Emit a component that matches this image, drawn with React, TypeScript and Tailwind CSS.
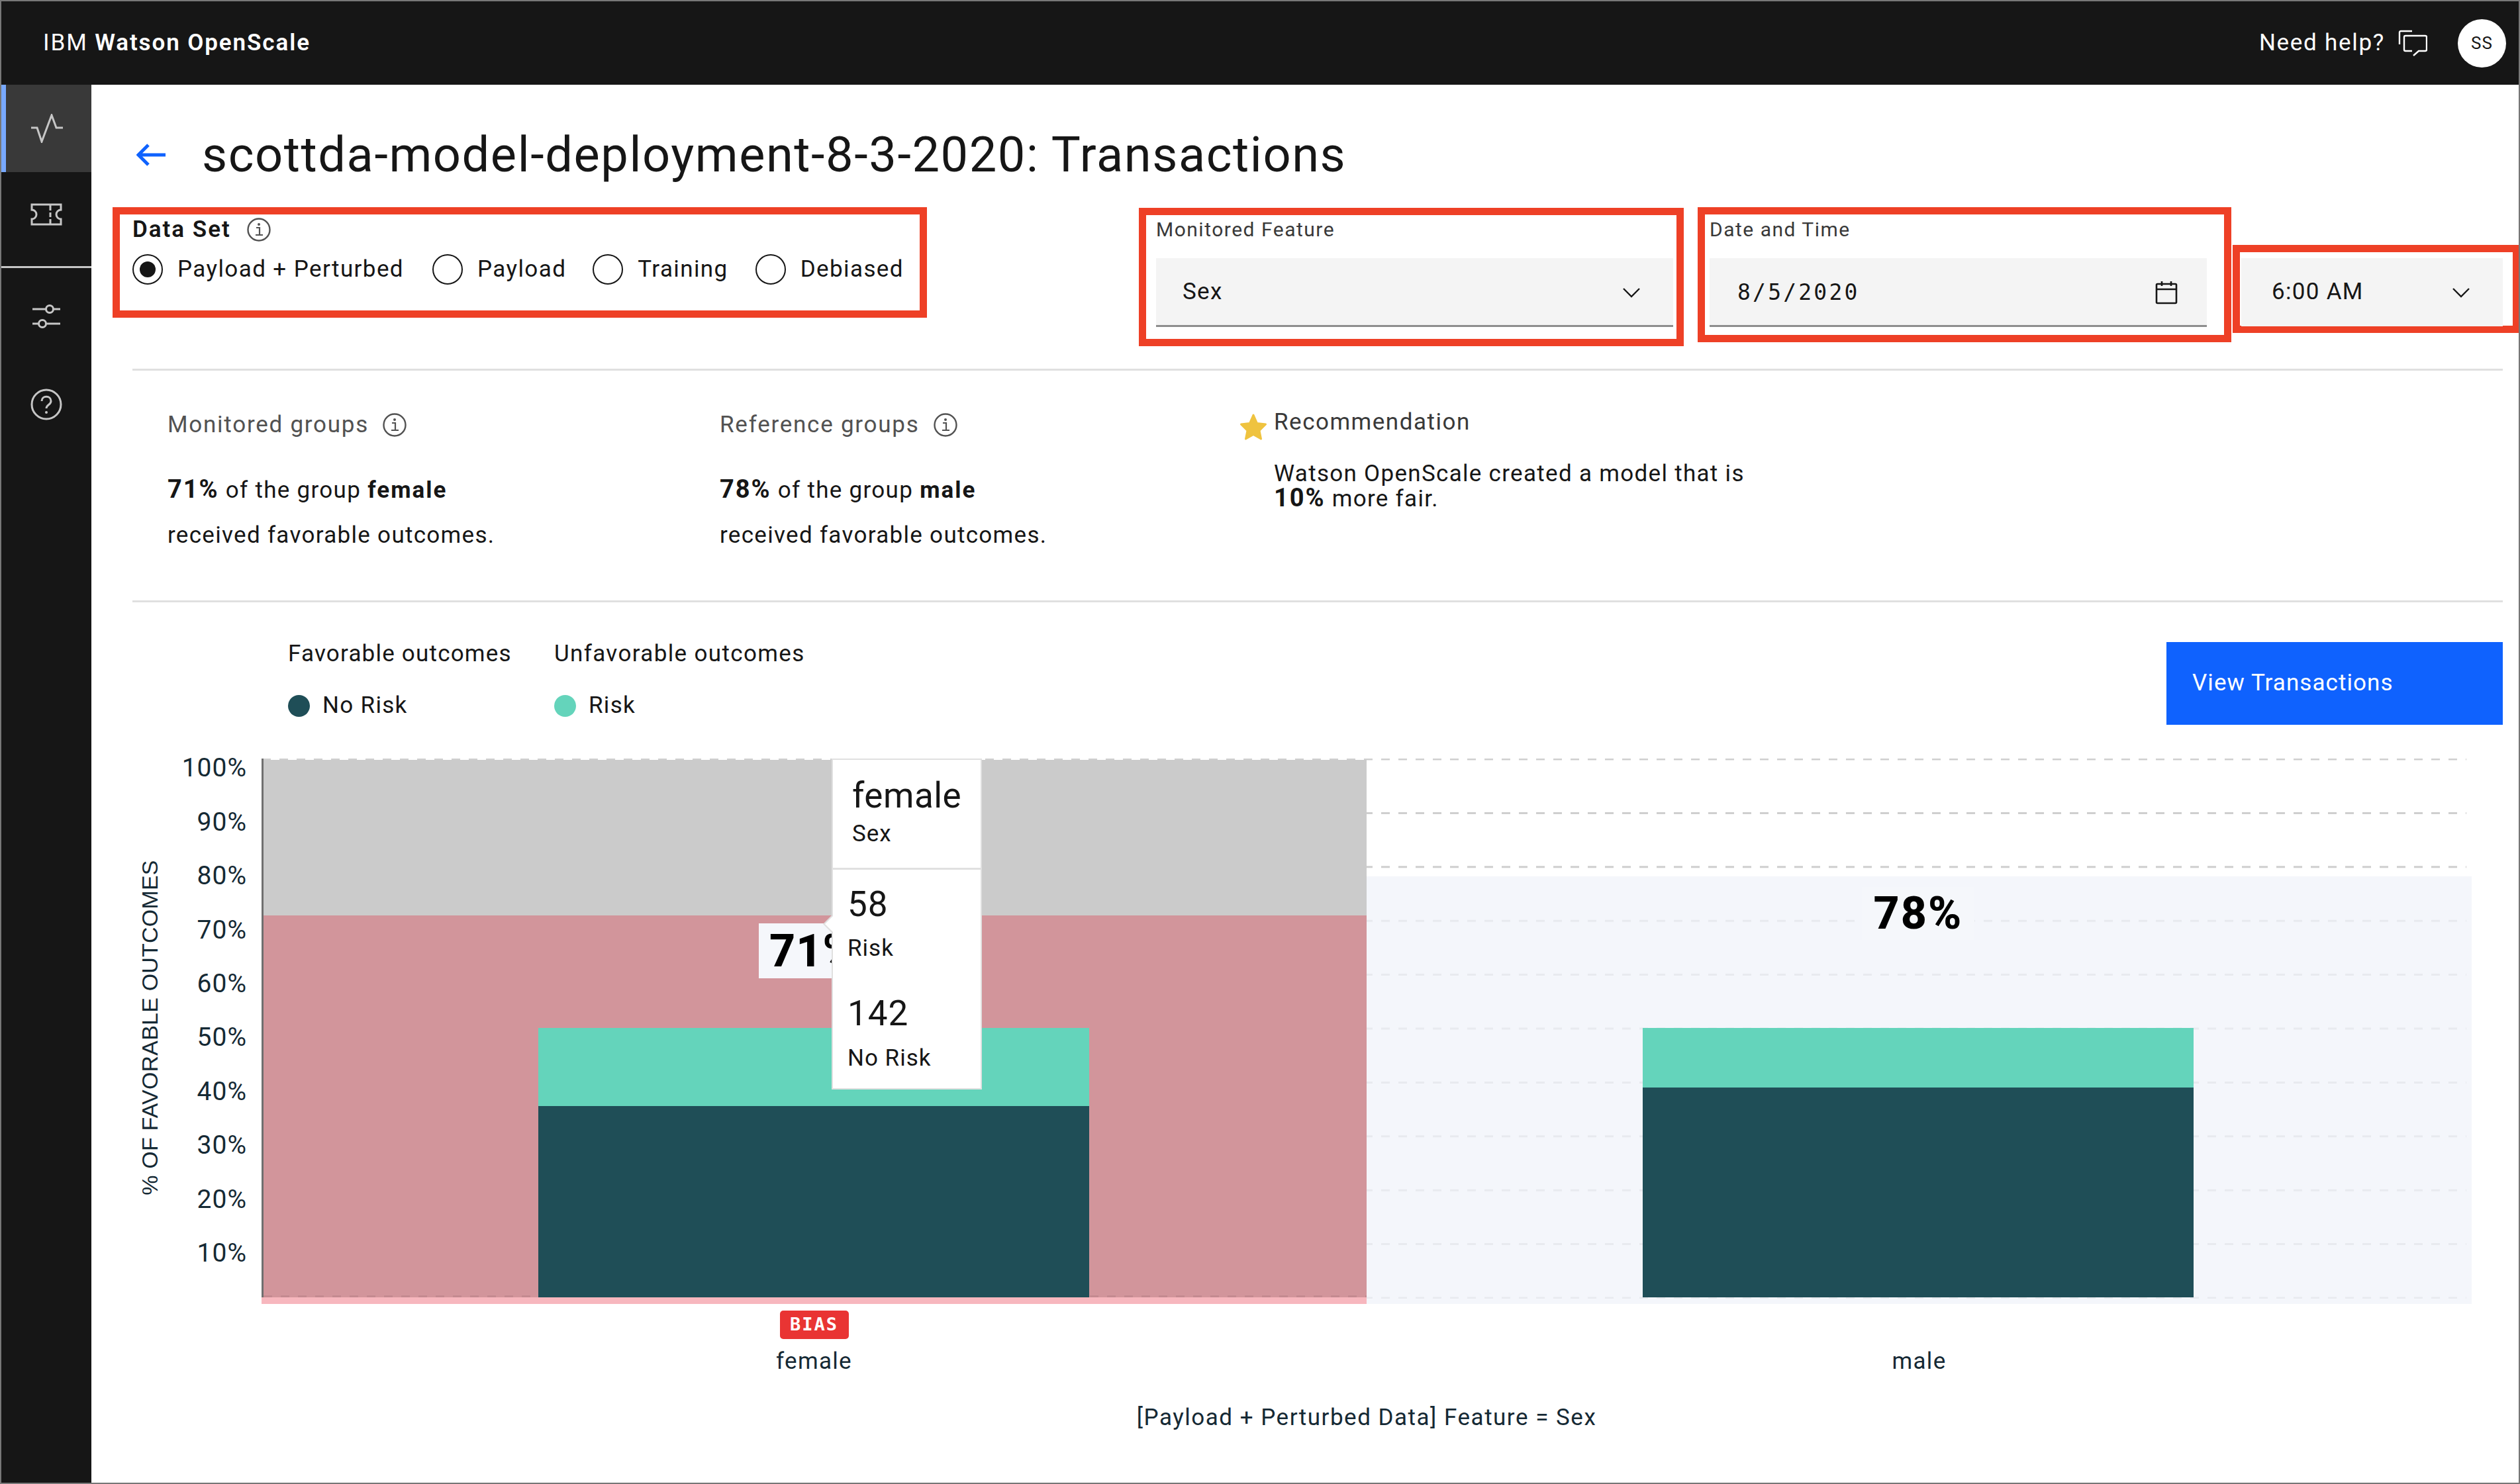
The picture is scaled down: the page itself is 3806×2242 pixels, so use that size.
const sans = "font-['Roboto',sans-serif]";

function InfoIcon({ className = "" }: { className?: string }) {
  return (
    <svg viewBox="0 0 36 36" className={"w-[36px] h-[36px] " + className} fill="none" stroke="#525252">
      <circle cx="18" cy="18" r="16.5" strokeWidth="2.4" />
      <path d="M14 15h5v11M13 26h11" strokeWidth="2.2" />
      <circle cx="18" cy="10" r="2" fill="#525252" stroke="none" />
    </svg>
  );
}

function Chevron() {
  return (
    <svg viewBox="0 0 28 16" className="w-[28px] h-[16px]" fill="none" stroke="#161616" strokeWidth="2.4">
      <path d="M2 2l12 12L26 2" />
    </svg>
  );
}

function Radio({ label, checked, ml }: { label: string; checked?: boolean; ml: string }) {
  return (
    <div className={"flex items-center " + ml}>
      <div className="w-[46px] h-[46px] rounded-full border-[2.5px] border-[#161616] flex items-center justify-center shrink-0">
        {checked && <div className="w-[24px] h-[24px] rounded-full bg-[#161616]" />}
      </div>
      <span className="ml-[22px] text-[35px] leading-[46px] text-[#161616] tracking-[1.4px] whitespace-nowrap">{label}</span>
    </div>
  );
}

function GroupCol({ title, pct, group }: { title: string; pct: string; group: string }) {
  return (
    <div className="w-[834px] flex flex-col">
      <div className="flex items-center h-[40px] text-[35px] text-[#525252] tracking-[1.75px] whitespace-nowrap">
        {title}
        <InfoIcon className="ml-[21px]" />
      </div>
      <div className="mt-[57px] h-[40px] leading-[40px] text-[35px] text-[#161616] tracking-[1.3px] whitespace-nowrap">
        <b className="font-bold text-[38px] tracking-[2px]">{pct}</b> of the group <b className="font-bold tracking-[2px]">{group}</b>
      </div>
      <div className="mt-[30px] h-[40px] leading-[40px] text-[35px] text-[#161616] tracking-[1.3px] whitespace-nowrap">received favorable outcomes.</div>
    </div>
  );
}

const ticks = ["100%", "90%", "80%", "70%", "60%", "50%", "40%", "30%", "20%", "10%"];

export default function App() {
  return (
    <div className={"w-[3806px] h-[2242px] border-2 border-[#777777] bg-white flex flex-col overflow-hidden " + sans}>
      <header className="h-[126px] shrink-0 bg-[#161616] flex items-center text-white">
        <div className="ml-[63px] text-[35px] tracking-[1.9px] whitespace-nowrap">
          IBM <span className="font-semibold">Watson OpenScale</span>
        </div>
        <div className="ml-auto flex items-center">
          <span className="text-[35px] tracking-[1.7px] whitespace-nowrap">Need help?</span>
          <svg viewBox="0 0 44 40" className="w-[44px] h-[40px] ml-[20px]" fill="none" stroke="#ffffff" strokeWidth="2.4">
            <path d="M2 22V4Q2 2 4 2H21" />
            <path d="M21 32H11Q9 32 9 30V11Q9 9 11 9H41Q43 9 43 11V30Q43 32 41 32H31L23 39" />
          </svg>
          <div className="ml-[46px] mr-[19px] w-[73px] h-[73px] rounded-full bg-white text-[#161616] text-[26px] tracking-[1px] flex items-center justify-center">SS</div>
        </div>
      </header>

      <div className="flex-1 flex min-h-0">
        <aside className="w-[136px] shrink-0 bg-[#161616] flex flex-col">
          <div className="h-[132px] bg-[#393939] border-l-[7px] border-[#78a9ff] flex items-center justify-center pr-[6px]">
            <svg viewBox="0 0 48 44" className="w-[48px] h-[44px]" fill="none" stroke="#c6c6c6" strokeWidth="3">
              <path d="M0 21H9L16 42L31 2L38 21H48" />
            </svg>
          </div>
          <div className="h-[145px] flex items-center justify-center border-b-[3px] border-[#c6c6c6] pb-[14px]">
            <svg viewBox="0 0 48 34" className="w-[48px] h-[34px]" fill="none" stroke="#c6c6c6" strokeWidth="3">
              <path d="M2 2H46V10A7 7 0 0 0 46 24V32H2V24A7 7 0 0 0 2 10Z" />
              <path d="M30 2V11M30 14V21M30 24V32" />
            </svg>
          </div>
          <div className="h-[146px] flex items-center justify-center">
            <svg viewBox="0 0 42 36" className="w-[42px] h-[36px]" fill="none" stroke="#c6c6c6" strokeWidth="3">
              <path d="M0 7H20M32 7H42M0 29H9M21 29H42" />
              <circle cx="26" cy="7" r="5.5" />
              <circle cx="15" cy="29" r="5.5" />
            </svg>
          </div>
          <div className="h-[120px] flex items-center justify-center">
            <svg viewBox="0 0 48 48" className="w-[48px] h-[48px]" fill="none" stroke="#c6c6c6" strokeWidth="3">
              <circle cx="24" cy="24" r="22" />
              <path d="M17 19c0-9 14-9 14 0c0 6-7 5-7 11" />
              <circle cx="24" cy="36" r="2" fill="#c6c6c6" stroke="none" />
            </svg>
          </div>
        </aside>

        <main className="flex-1 min-w-0 flex flex-col">
          {/* title */}
          <div className="h-[185px] pl-[68px] flex items-center pt-[27px] shrink-0">
            <svg viewBox="0 0 44 34" className="w-[44px] h-[34px]" fill="none" stroke="#0f62fe" strokeWidth="5">
              <path d="M18 2L3 17L18 32M3 17H44" />
            </svg>
            <h1 className="ml-[55px] text-[74px] leading-[90px] tracking-[1.55px] text-[#161616] whitespace-nowrap">
              scottda-model-deployment-8-3-2020: Transactions
            </h1>
          </div>

          {/* filters */}
          <div className="h-[244px] shrink-0 flex items-start pl-[32px]">
            <div className="w-[1230px] h-[167px] border-[11px] border-[#ee4026] pl-[19px] pt-[5px]">
              <div className="flex items-center h-[36px] text-[35px] font-semibold text-[#161616] tracking-[2px]">
                Data Set
                <InfoIcon className="ml-[24px]" />
              </div>
              <div className="flex items-center mt-[19px]">
                <Radio label="Payload + Perturbed" checked ml="" />
                <Radio label="Payload" ml="ml-[43px]" />
                <Radio label="Training" ml="ml-[40px]" />
                <Radio label="Debiased" ml="ml-[41px]" />
              </div>
            </div>
            <div className="ml-[320px] mt-[1px] w-[823px] h-[209px] border-[11px] border-[#ee4026] pl-[15px]">
              <div className="h-[42px] flex items-center text-[30px] text-[#393939] tracking-[1.5px]">Monitored Feature</div>
              <div className="mt-[23px] w-[781px] h-[104px] bg-[#f4f4f4] border-b-[3px] border-[#8d8d8d] flex items-center justify-between pl-[40px] pr-[49px] pt-[2px] text-[35px] text-[#161616] tracking-[1.3px]">
                Sex
                <Chevron />
              </div>
            </div>
            <div className="ml-[21px] w-[806px] h-[204px] border-[11px] border-[#ee4026] pl-[7px]">
              <div className="h-[44px] flex items-center text-[30px] text-[#393939] tracking-[1.5px]">Date and Time</div>
              <div className="mt-[22px] w-[751px] h-[104px] bg-[#f4f4f4] border-b-[3px] border-[#8d8d8d] flex items-center justify-between pl-[42px] pr-[44px] pt-[2px] text-[33px] text-[#161616] font-['DejaVu_Sans_Mono',monospace] tracking-[3.2px]">
                8/5/2020
                <svg viewBox="0 0 34 36" className="w-[34px] h-[36px]" fill="none" stroke="#161616" strokeWidth="2.6">
                  <rect x="2" y="5" width="30" height="29" rx="1.5" />
                  <path d="M2 13H32M10 1V8M24 1V8" />
                </svg>
              </div>
            </div>
            <div className="ml-[2px] mt-[57px] w-[432px] h-[133px] border-[11px] border-[#ee4026] border-r-[9px] pl-[2px] pt-[9px]">
              <div className="w-[395px] h-[103px] bg-[#f4f4f4] flex items-center justify-between pl-[46px] pr-[49px] text-[35px] text-[#161616] tracking-[1.3px]">
                6:00 AM
                <Chevron />
              </div>
            </div>
          </div>

          {/* summary */}
          <div className="ml-[62px] mr-[24px] h-[353px] shrink-0 border-y-[3px] border-[#e0e0e0] pl-[53px] pt-[62px] flex items-start">
            <GroupCol title="Monitored groups" pct="71%" group="female" />
            <GroupCol title="Reference groups" pct="78%" group="male" />
            <div className="flex items-start">
              <svg viewBox="0 0 42 42" className="w-[42px] h-[42px] mt-[2px] -ml-[49px]" fill="#efc33f" stroke="#efc33f" strokeWidth="3" strokeLinejoin="round">
                <path d="M21 3L26.5 15.5L39.5 17L30 26.5L32.5 39L21 32.5L9.5 39L12 26.5L2.5 17L15.5 15.5Z" />
              </svg>
              <div className="ml-[10px] -mt-[4px] flex flex-col">
                <div className="h-[40px] flex items-center text-[35px] text-[#393939] tracking-[1.5px]">Recommendation</div>
                <div className="mt-[40px] text-[35px] leading-[36px] text-[#161616] tracking-[1.3px] whitespace-nowrap">
                  Watson OpenScale created a model that is
                  <br />
                  <b className="font-bold text-[38px] leading-[36px] tracking-[2px]">10%</b> more fair.
                </div>
              </div>
            </div>
          </div>

          {/* legend */}
          <div className="h-[236px] shrink-0 flex items-start pl-[297px] pr-[24px] pt-[58px] text-[35px] text-[#161616]">
            <div className="w-[402px]">
              <div className="h-[40px] flex items-center tracking-[1.2px]">Favorable outcomes</div>
              <div className="mt-[38px] h-[40px] flex items-center tracking-[1.3px]">
                <span className="w-[33px] h-[33px] rounded-full bg-[#1f4e57] mr-[19px]" />No Risk
              </div>
            </div>
            <div>
              <div className="h-[40px] flex items-center tracking-[1.35px]">Unfavorable outcomes</div>
              <div className="mt-[38px] h-[40px] flex items-center tracking-[1.3px]">
                <span className="w-[33px] h-[33px] rounded-full bg-[#64d4bb] mr-[19px]" />Risk
              </div>
            </div>
            <div className="ml-auto mt-[2px] w-[508px] h-[125px] bg-[#0f62fe] text-white tracking-[1.06px] flex items-center pl-[39px]">View Transactions</div>
          </div>

          {/* chart */}
          <div className="flex-1 flex min-h-0 text-[#152934]">
            <div className="w-[140px] shrink-0 h-[812px] flex items-center justify-center pl-[37px]">
              <div className="-rotate-90 whitespace-nowrap text-[34px] tracking-[0.2px] font-['Liberation_Sans',sans-serif]">% OF FAVORABLE OUTCOMES</div>
            </div>
            <div className="w-[95px] shrink-0 h-[814px] flex flex-col items-end text-[39px] tracking-[1px]">
              {ticks.map((t) => (
                <div key={t} className="h-[81.4px] flex items-center translate-y-[-26px]">{t}</div>
              ))}
            </div>
            <div className="flex-1 min-w-0 flex flex-col pl-[22px]">
              <div className="relative w-[3338px] h-[824px] flex">
                <svg className="absolute left-0 top-0 w-[3338px] h-[816px]" viewBox="0 0 3338 816">
                  {Array.from({ length: 11 }).map((_, i) => (
                    <line key={i} x1="1" x2="3330" y1={1 + i * 81.4} y2={1 + i * 81.4} stroke="#cfcfcf" strokeWidth="3" strokeDasharray="13 13" />
                  ))}
                </svg>
                <div className="relative w-[1669px] h-[824px] flex flex-col border-l-[3px] border-[#6f6f6f] pt-[2px]">
                  <div className="h-[235px] bg-[#cbcbcb]" />
                  <div className="relative h-[577px] bg-[#d2959b] flex flex-col items-center justify-end">
                    <svg className="absolute left-0 bottom-0 w-[1666px] h-[3px]" viewBox="0 0 1666 3">
                      <line x1="0" x2="1666" y1="1.5" y2="1.5" stroke="#c48a90" strokeWidth="3" strokeDasharray="13 13" />
                    </svg>
                    <div className="relative -ml-[4px] w-[832px] h-[407px] flex flex-col">
                      <div className="h-[118px] bg-[#64d4bb]" />
                      <div className="flex-1 bg-[#1f4e57]" />
                    </div>
                  </div>
                  <div className="h-[10px] bg-[#f7b7be] -ml-[3px]" />
                </div>
                <div className="relative w-[1669px] h-[824px] pt-[178px]">
                  <div className="h-[646px] bg-[#f0f3f9]/75 flex flex-col items-center justify-end pb-[10px]">
                    <div className="-ml-[4px] w-[832px] h-[407px] flex flex-col">
                      <div className="h-[90px] bg-[#64d4bb]" />
                      <div className="flex-1 bg-[#1f4e57]" />
                    </div>
                  </div>
                </div>

                {/* value labels */}
                <div className="absolute left-[2417px] top-[194px] w-[170px] h-[80px] bg-[#f5f7fb] flex items-center justify-center text-[68px] font-extrabold text-black tracking-[2px]">78%</div>
                <div className="absolute left-[751px] top-[249px] w-[130px] h-[83px] bg-[#f5f7fb] overflow-hidden pl-[16px] flex items-center text-[68px] font-extrabold text-black tracking-[1px]">71%</div>

                {/* tooltip */}
                <div className="absolute left-[861px] top-0 w-[227px] h-[500px] bg-white border-2 border-[#e0e0e0] text-[#161616] flex flex-col">
                  <div className="h-[166px] border-b-[3px] border-[#e0e0e0] pl-[29px] pt-[22px]">
                    <div className="text-[53px] leading-[64px] tracking-[0.5px]">female</div>
                    <div className="text-[35px] leading-[40px] mt-[6px] tracking-[1px]">Sex</div>
                  </div>
                  <div className="pl-[22px] pt-[20px]">
                    <div className="text-[53px] leading-[64px] tracking-[1px]">58</div>
                    <div className="text-[35px] leading-[40px] mt-[15px] tracking-[1px]">Risk</div>
                    <div className="text-[53px] leading-[64px] mt-[46px] tracking-[1px]">142</div>
                    <div className="text-[35px] leading-[40px] mt-[16px] tracking-[1px]">No Risk</div>
                  </div>
                  <div className="absolute left-[-15px] top-[234px] w-[14px] h-[28px] bg-[#e0e0e0] [clip-path:polygon(100%_0,0_50%,100%_100%)]" />
                  <div className="absolute left-[-12px] top-[236px] w-[12px] h-[24px] bg-white [clip-path:polygon(100%_0,0_50%,100%_100%)]" />
                </div>
              </div>

              <div className="flex w-[3338px] text-[35px] tracking-[1.3px]">
                <div className="w-[1669px] flex flex-col items-center">
                  <div className="mt-[10px] w-[104px] h-[43px] rounded-[5px] bg-[#e93433] text-white text-[27px] font-bold tracking-[2px] flex items-center justify-center font-['DejaVu_Sans_Mono',monospace]">BIAS</div>
                  <div className="mt-[14px] h-[40px] leading-[40px]">female</div>
                </div>
                <div className="w-[1669px] flex flex-col items-center">
                  <div className="mt-[67px] h-[40px] leading-[40px]">male</div>
                </div>
              </div>
              <div className="w-[3338px] mt-[45px] text-center text-[35px] tracking-[1.5px] h-[40px] leading-[40px]">[Payload + Perturbed Data] Feature = Sex</div>
            </div>
          </div>
        </main>
      </div>
    </div>
  );
}
